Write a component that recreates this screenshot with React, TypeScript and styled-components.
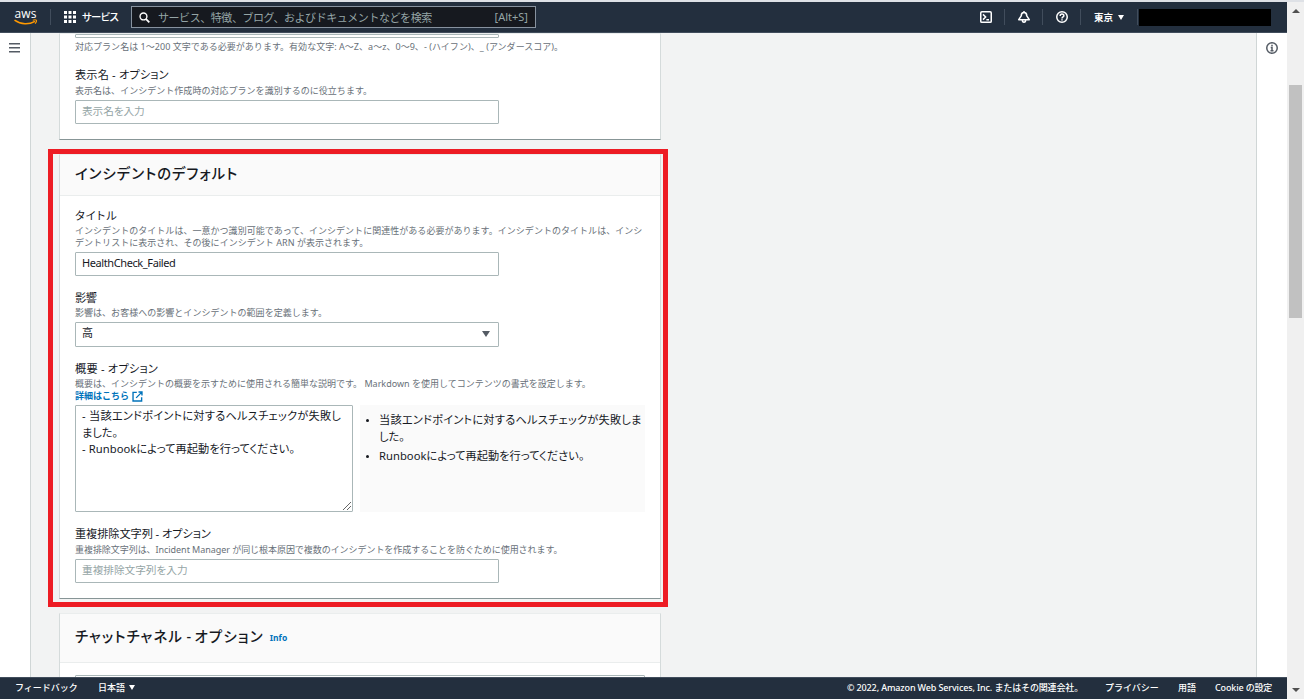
import React from "react";
import styled, { createGlobalStyle, css } from "styled-components";

const Global = createGlobalStyle`
  * { box-sizing: border-box; }
  html, body { margin: 0; padding: 0; }
  body {
    font-family: "Noto Sans", "Noto Sans CJK JP", sans-serif;
    font-feature-settings: "palt";
    font-size: 11px;
    color: #16191f;
    overflow: hidden;
  }
`;

const Window = styled.div`
  display: flex;
  width: 1304px;
  height: 699px;
  padding-top: 2px;
  background: #dee1e6;
`;
const Page = styled.div`
  width: 1287px;
  display: flex;
  flex-direction: column;
`;

/* Text run with adjustable tracking */
const T = styled.span<{ $ls?: number }>`
  letter-spacing: ${(p) => p.$ls ?? 0}px;
  white-space: pre;
`;

const TopBar = styled.header`
  height: 31px;
  flex: none;
  display: flex;
  align-items: center;
  background: #232f3e;
  border-bottom: 1px solid #414d5c;
  color: #fff;
`;
const Divider = styled.i`
  width: 1px;
  height: 16px;
  background: #414d5c;
`;
const Logo = styled.svg`
  margin: 0 12px 0 14px;
  overflow: visible;
`;
const Services = styled.div`
  display: flex;
  align-items: center;
  gap: 6px;
  width: 80px;
  padding: 0 0 1px 13px;
  font-size: 10.4px;
  font-weight: 500;
`;
const Search = styled.div`
  display: flex;
  align-items: center;
  width: 405px;
  height: 22px;
  padding: 0 7px;
  border: 1px solid #87929f;
  background: #16191f;
  color: #95a5a6;
  font-size: 11px;
  font-feature-settings: normal;
  svg { margin-right: 8px; }
  span { margin-bottom: 1px; }
  span:last-child { margin-left: auto; }
`;
const NavCell = styled.div<{ $w: number }>`
  width: ${(p) => p.$w}px;
  display: flex;
  align-items: center;
  justify-content: center;
  gap: 5px;
  font-size: 9.5px;
  font-weight: 700;
`;
const Spacer = styled.div`
  flex: 1;
`;
const Account = styled.div`
  width: 132px;
  height: 17px;
  margin: 0 16px 0 1px;
  background: #000;
`;
const Caret = styled.i<{ $s?: number; $c?: string; $up?: boolean }>`
  width: 0;
  height: 0;
  border: solid transparent;
  border-width: 0 ${(p) => p.$s ?? 3}px;
  ${(p) =>
    p.$up
      ? css`border-bottom: ${p.$s ?? 3}px solid ${p.$c};`
      : css`border-top: ${p.$s === 4 ? 4 : (p.$s ?? 3) + 2}px solid ${p.$c ?? "#fff"};`}
`;

const Body = styled.div`
  flex: 1;
  min-height: 0;
  display: flex;
  background: #f2f3f3;
`;
const Rail = styled.aside<{ $right?: boolean }>`
  width: 31px;
  flex: none;
  display: flex;
  justify-content: center;
  align-items: flex-start;
  padding-top: ${(p) => (p.$right ? 9 : 10)}px;
  padding-right: ${(p) => (p.$right ? 0 : 1)}px;
  background: #fff;
  border: solid #d0d6d6;
  border-width: ${(p) => (p.$right ? "0 0 0 1px" : "0 1px 0 0")};
`;
const Main = styled.main`
  flex: 1;
  overflow: hidden;
  padding-left: 28px;
`;
const Card = styled.section`
  width: 602px;
  background: #fff;
  border: 1px solid #d5dbdb;
  border-top-color: #eaeded;
  border-bottom-color: #879596;
`;
const CardBody = styled.div<{ $pb?: number; $pt?: number }>`
  padding: ${(p) => p.$pt ?? 0}px 15px ${(p) => p.$pb ?? 15}px;
`;
const CardHead = styled.h2<{ $h: number }>`
  display: flex;
  align-items: center;
  gap: 6px;
  height: ${(p) => p.$h}px;
  margin: 0;
  padding: 0 15px 5px;
  background: #fafafa;
  border-bottom: 1px solid #eaeded;
  font-size: 14.4px;
  font-weight: 500;
`;
const Info = styled.a`
  color: #0073bb;
  font-size: 8.5px;
  font-weight: 700;
  padding-top: 4px;
`;
/* Red frame that surrounds the highlighted card */
const Highlight = styled.div`
  width: 620px;
  height: 458px;
  margin: 9px 0 6px -11px;
  padding-left: 6px;
  border: 5px solid #ed1c24;
  ${Card} { height: 445px; }
`;
const Field = styled.div<{ $mt?: number }>`
  margin-top: ${(p) => p.$mt ?? 13}px;
`;
const Label = styled.div<{ $up?: boolean }>`
  height: 18px;
  line-height: ${(p) => (p.$up ? 16 : 18)}px;
  font-size: 11.2px;
`;
const Desc = styled.div<{ $gap?: number }>`
  margin-bottom: ${(p) => p.$gap ?? 3}px;
  line-height: 12px;
  font-size: 9px;
  font-feature-settings: normal;
  color: #687078;
  > span { display: block; height: 12px; }
`;
const Input = styled.div<{ $h?: number; $w?: number; $hint?: boolean }>`
  width: ${(p) => p.$w ?? 424}px;
  height: ${(p) => p.$h ?? 24}px;
  display: flex;
  align-items: center;
  justify-content: space-between;
  padding: 0 8px ${(p) => (p.$h ? 1 : 3)}px 6px;
  border: 1px solid #aab7b8;
  border-radius: 1px;
  background: #fff;
  font-size: ${(p) => (p.$hint ? 10.7 : 11)}px;
  color: ${(p) => (p.$hint ? "#95a5a6" : "#16191f")};
`;
const SelectValue = styled.span`
  padding-bottom: 4px;
`;
const Split = styled.div`
  display: flex;
  gap: 7px;
  height: 107px;
  font-size: 11.2px;
  line-height: 16.5px;
`;
const TextArea = styled.div`
  width: 278px;
  display: flex;
  flex-direction: column;
  padding: 2px 0 0 6px;
  border: 1px solid #aab7b8;
  border-radius: 1px;
  svg { margin: auto 1px 1px auto; }
`;
const Preview = styled.div`
  width: 285px;
  background: #fafafa;
  ul { margin: 0; padding: 7px 0 0 19px; }
  li { margin-bottom: 3px; }
  li::marker { font-size: 8.5px; }
  li > span { display: block; }
`;
const Link = styled.span`
  && { display: flex; }
  align-items: center;
  gap: 3px;
  color: #0073bb;
  font-weight: 700;
`;
const Footer = styled.footer`
  height: 22px;
  flex: none;
  display: flex;
  align-items: center;
  padding: 0 15px 2px;
  background: #232f3e;
  border-top: 1px solid #414d5c;
  color: #fff;
  font-size: 9px;
  font-weight: 500;
  font-feature-settings: normal;
`;
const FootItem = styled.div<{ $w?: number }>`
  display: flex;
  align-items: center;
  gap: 4px;
  width: ${(p) => (p.$w ? p.$w + "px" : "auto")};
`;
const Scroll = styled.div`
  width: 17px;
  display: flex;
  flex-direction: column;
  align-items: center;
  padding: 7px 0 7px;
  background: #f0f0f0;
`;
const Thumb = styled.div`
  width: 13px;
  height: 233px;
  margin: 72px 0 auto;
  background: #c1c1c1;
`;

const svgBase = { fill: "none", viewBox: "0 0 16 16" };

export default function App() {
  return (
    <>
      <Global />
      <Window>
        <Page>
          <TopBar>
            <Logo width="24" height="17" viewBox="0 0 24 17">
              <text x="0.500" y="8.800" fontFamily="Open Sans, sans-serif" fontSize="12" fontWeight="500" fill="#fff" textLength="22">aws</text>
              <path d="M.5 11.200c6.500 4.600 14.500 4.600 20.500 1.100" stroke="#f90" strokeWidth="1.500" fill="none" />
              <path d="M18.800 11.200c1.800-.6 3.200-.4 3.500 0s-.1 2.200-1.200 3.500" stroke="#f90" strokeWidth="1.100" fill="none" />
            </Logo>
            <Divider />
            <Services>
              <svg width="12" height="12" viewBox="0 0 12 12" fill="#fff">
                {[0, 4.5, 9].map((y) => [0, 4.5, 9].map((x) => <rect key={x + "-" + y} x={x} y={y} width="3" height="3" />))}
              </svg>
              <T $ls={-0.7}>サービス</T>
            </Services>
            <Search>
              <svg width="11" height="11" {...svgBase} stroke="#fff" strokeWidth="2">
                <circle cx="6.500" cy="6.500" r="5" />
                <path d="M10.300 10.300 15 15" strokeWidth="2.600" />
              </svg>
              <T $ls={-0.44}>サービス、特徴、ブログ、およびドキュメントなどを検索</T>
              <T>[Alt+S]</T>
            </Search>
            <Spacer />
            <NavCell $w={37}>
              <svg width="12" height="12" {...svgBase} stroke="#fff" strokeWidth="2">
                <rect x="1" y="1" width="14" height="14" rx="1.500" />
                <path d="M4 4.500 7.500 8 4 11.500M8.500 11.500H12" />
              </svg>
            </NavCell>
            <Divider />
            <NavCell $w={37}>
              <svg width="12" height="12" {...svgBase} stroke="#fff" strokeWidth="2" strokeLinejoin="round">
                <path d="M8 0v2M8 2C5.300 2 4.300 4 4.300 6.500L1 11.500h14L11.700 6.500C11.700 4 10.700 2 8 2ZM5.800 11.500c0 4.500 4.400 4.500 4.400 0" />
              </svg>
            </NavCell>
            <Divider />
            <NavCell $w={37}>
              <svg width="12" height="12" {...svgBase} stroke="#fff" strokeWidth="2">
                <circle cx="8" cy="8" r="7" />
                <path d="M5.500 6.500C5.500 3.300 10.500 3.300 10.500 6.300 10.500 8 8 7.800 8 10M8 11v1.700" />
              </svg>
            </NavCell>
            <Divider />
            <NavCell $w={56}>
              <T>東京</T>
              <Caret />
            </NavCell>
            <Divider />
            <Account />
          </TopBar>

          <Body>
            <Rail>
              <svg width="11" height="10" viewBox="0 0 11 10" fill="#545b64">
                <path d="M0 0h11v1.500H0zM0 4h11v1.500H0zM0 8h11v1.500H0z" />
              </svg>
            </Rail>
            <Main>
              <Card>
                <CardBody $pb={15}>
                  <Input $h={4} />
                  <Field $mt={3}>
                    <Desc $gap={0}>
                      <T $ls={0.03}>対応プラン名は 1～200 文字である必要があります。有効な文字: A～Z、a～z、0～9、- (ハイフン)、_ (アンダースコア)。</T>
                    </Desc>
                  </Field>
                  <Field $mt={14}>
                    <Label $up><T $ls={0.15}>表示名 - オプション</T></Label>
                    <Desc><T $ls={0.03}>表示名は、インシデント作成時の対応プランを識別するのに役立ちます。</T></Desc>
                    <Input $hint><T $ls={-0.1}>表示名を入力</T></Input>
                  </Field>
                </CardBody>
              </Card>

              <Highlight>
                <Card>
                  <CardHead $h={41}><T $ls={1}>インシデントのデフォルト</T></CardHead>
                  <CardBody>
                    <Field $mt={11}>
                      <Label><T $ls={1}>タイトル</T></Label>
                      <Desc>
                        <T $ls={0.035}>インシデントのタイトルは、一意かつ識別可能であって、インシデントに関連性がある必要があります。インシデントのタイトルは、インシ</T>
                        <T $ls={0.035}>デントリストに表示され、その後にインシデント ARN が表示されます。</T>
                      </Desc>
                      <Input><T $ls={-0.4}>HealthCheck_Failed</T></Input>
                    </Field>
                    <Field>
                      <Label><T $ls={-0.4}>影響</T></Label>
                      <Desc><T $ls={0.03}>影響は、お客様への影響とインシデントの範囲を定義します。</T></Desc>
                      <Input $h={25}>
                        <SelectValue>高</SelectValue>
                        <Caret $s={4.5} $c="#545b64" />
                      </Input>
                    </Field>
                    <Field>
                      <Label><T $ls={0.2}>概要 - オプション</T></Label>
                      <Desc>
                        <T>概要は、インシデントの概要を示すために使用される簡単な説明です。 Markdown を使用してコンテンツの書式を設定します。</T>
                        <Link>
                          <T>詳細はこちら</T>
                          <svg width="11" height="11" {...svgBase} stroke="#0073bb" strokeWidth="2">
                            <path d="M7 2H1.500v12.500H14V9M9.500 1.500h5v5M14 2 6 10" />
                          </svg>
                        </Link>
                      </Desc>
                      <Split>
                        <TextArea>
                          <T $ls={0.25}>- 当該エンドポイントに対するヘルスチェックが失敗し</T>
                          <T>ました。</T>
                          <T $ls={0.08}>- Runbookによって再起動を行ってください。</T>
                          <svg width="8" height="8" viewBox="0 0 8 8" stroke="#555" strokeWidth=".9">
                            <path d="M0 8 8 0M4 8l4-4" />
                          </svg>
                        </TextArea>
                        <Preview>
                          <ul>
                            <li>
                              <T $ls={0.25}>当該エンドポイントに対するヘルスチェックが失敗しま</T>
                              <T>した。</T>
                            </li>
                            <li><T $ls={0.04}>Runbookによって再起動を行ってください。</T></li>
                          </ul>
                        </Preview>
                      </Split>
                    </Field>
                    <Field $mt={14}>
                      <Label $up><T $ls={-0.08}>重複排除文字列 - オプション</T></Label>
                      <Desc><T $ls={-0.05}>重複排除文字列は、Incident Manager が同じ根本原因で複数のインシデントを作成することを防ぐために使用されます。</T></Desc>
                      <Input $hint><T $ls={-0.05}>重複排除文字列を入力</T></Input>
                    </Field>
                  </CardBody>
                </Card>
              </Highlight>

              <Card>
                <CardHead $h={49}>
                  <span>
                    <T $ls={1.1}>チャットチャネル</T>
                    <T $ls={-0.2}> - </T>
                    <T $ls={1.2}>オプション</T>
                  </span>
                  <Info><T>Info</T></Info>
                </CardHead>
                <CardBody $pt={12}>
                  <Input $w={570} />
                </CardBody>
              </Card>
            </Main>
            <Rail $right>
              <svg width="12" height="12" {...svgBase} stroke="#545b64" strokeWidth="2">
                <circle cx="8" cy="8" r="7" />
                <path d="M8 3.500v2M6.300 7.300H8v4.200M6 11.700h4" />
              </svg>
            </Rail>
          </Body>

          <Footer>
            <FootItem $w={83}><T>フィードバック</T></FootItem>
            <FootItem><T>日本語</T><Caret /></FootItem>
            <Spacer />
            <FootItem $w={258}><T $ls={-0.13}>© 2022, Amazon Web Services, Inc. またはその関連会社。</T></FootItem>
            <FootItem $w={73}><T>プライバシー</T></FootItem>
            <FootItem $w={37}><T>用語</T></FootItem>
            <FootItem $w={57}><T $ls={-0.15}>Cookie の設定</T></FootItem>
          </Footer>
        </Page>
        <Scroll>
          <Caret $up $s={4} $c="#505050" />
          <Thumb />
          <Caret $s={4} $c="#505050" />
        </Scroll>
      </Window>
    </>
  );
}
